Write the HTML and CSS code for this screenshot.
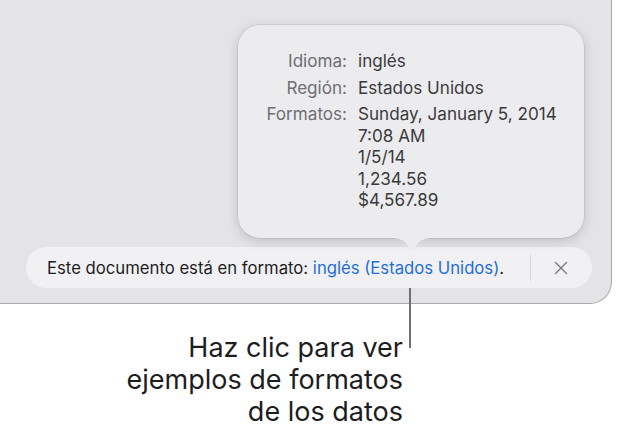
FILE: index.html
```html
<!DOCTYPE html>
<html lang="es">
<head>
<meta charset="utf-8">
<link rel="stylesheet" href="styles.css">
</head>
<body>
<div class="stage">
  <div class="window">
    <div class="popover">
      <div class="info">
        <div class="label">Idioma:</div>
        <div class="value">inglés</div>
        <div class="label">Región:</div>
        <div class="value">Estados Unidos</div>
        <div class="label">Formatos:</div>
        <div class="value">Sunday, January 5, 2014<br>7:08 AM<br>1/5/14<br>1,234.56<br>$4,567.89</div>
      </div>
      <svg class="arrow" width="44" height="16" viewBox="0 0 44 16"><path d="M0 0 C10 0 14 2 18 8 L20 11 Q22 14 24 11 L26 8 C30 2 34 0 44 0 Z" fill="#ececee"/></svg>
    </div>
    <div class="bar">
      <span class="msg">Este documento está en formato: <span class="link">inglés (Estados Unidos)</span>.</span>
      <span class="divider"></span>
      <span class="close"><svg width="14" height="14" viewBox="0 0 14 14"><path d="M1.5 1.5 L12.5 12.5 M12.5 1.5 L1.5 12.5" stroke="#7a7a7e" stroke-width="1.4" stroke-linecap="round"/></svg></span>
    </div>
  </div>
  <div class="leader"></div>
  <p class="callout">Haz clic para ver<br>ejemplos de formatos<br>de los datos</p>
</div>
</body>
</html>
```
FILE: styles.css
```css
* { box-sizing: border-box; }
html, body { margin: 0; padding: 0; background: #ffffff; }
body { font-family: "Inter", "Roboto", sans-serif; }
.stage { position: relative; width: 617px; height: 436px; overflow: hidden; }
.window {
  position: relative;
  width: 612px;
  height: 304px;
  background: #e4e4e7;
  border-right: 1px solid #a9a9ac;
  border-bottom: 1px solid #a9a9ac;
  border-bottom-right-radius: 22px;
  display: flex;
  flex-direction: column;
  justify-content: flex-end;
  padding: 0 19px 15px 26px;
}
.popover {
  position: absolute;
  left: 238px;
  top: 25px;
  width: 346px;
  height: 213px;
  background: #ececee;
  border-radius: 22px;
  box-shadow: 0 0 0 0.5px rgba(0,0,0,0.12), 0 3px 12px rgba(0,0,0,0.16);
  padding: 25px 0 0 0;
  z-index: 2;
}
.info {
  display: grid;
  grid-template-columns: 109px auto;
  column-gap: 11px;
  row-gap: 5px;
  font-size: 17.1px;
  line-height: 21.5px;
}
.label { text-align: right; color: #6e6e73; }
.value { color: #3a3a3c; }
.arrow { position: absolute; left: 152px; top: 213px; }
.bar {
  height: 41px;
  border-radius: 21px;
  background: #f1f1f3;
  display: flex;
  align-items: center;
  padding-left: 21px;
  font-size: 16.7px;
  color: #1d1d1f;
}
.msg { flex: 1; white-space: nowrap; }
.link { color: #1f6fd6; }
.divider { width: 1px; height: 26px; background: #d6d6d9; margin-right: 23px; }
.close { width: 14px; height: 14px; display: flex; margin-right: 24px; }
.leader {
  position: absolute;
  left: 409px;
  top: 288px;
  width: 2px;
  height: 60px;
  background: #707073;
}
.callout {
  margin: 28px 0 0 0;
  width: 403px;
  text-align: right;
  font-size: 27px;
  line-height: 32px;
  color: #1d1d1f;
}
```
